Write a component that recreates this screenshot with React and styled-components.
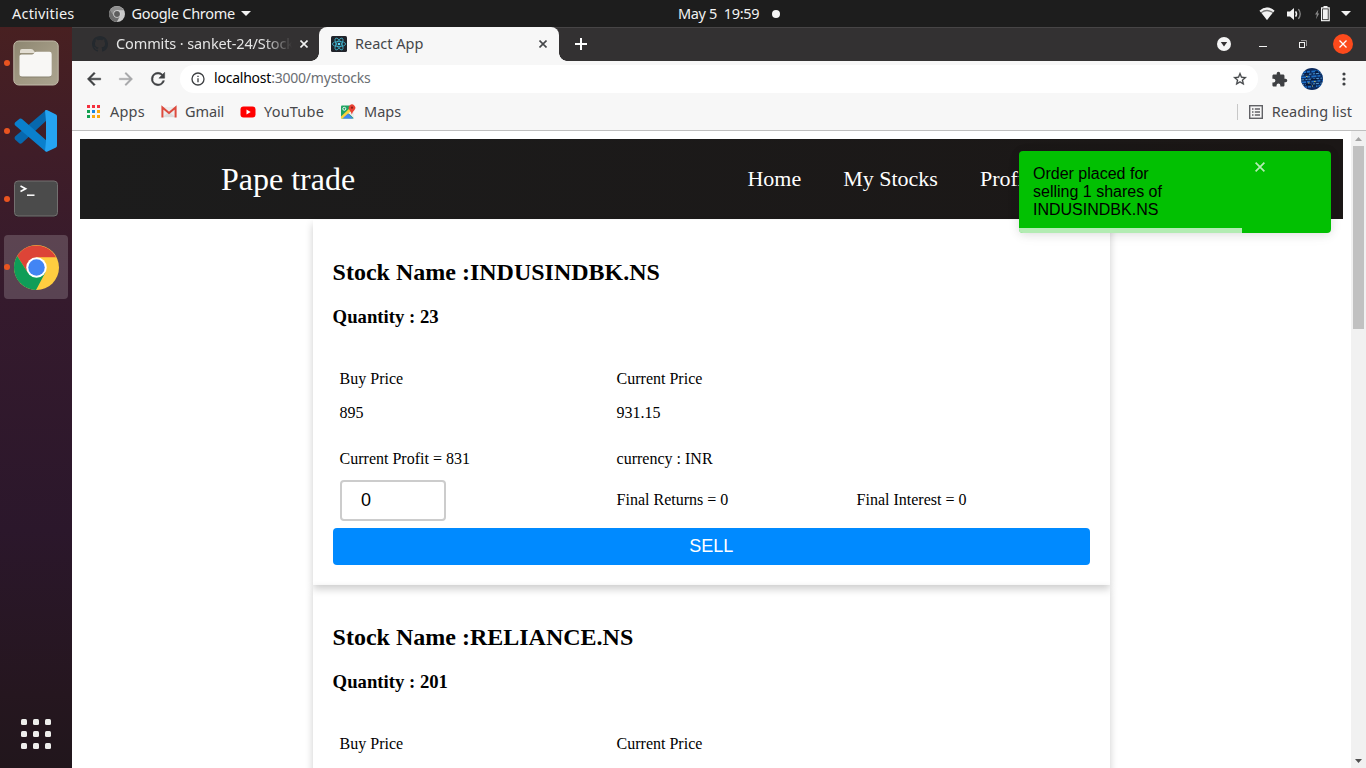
import React from "react";
import styled, { createGlobalStyle, css } from "styled-components";

const uiFont = `"Noto Sans", "Open Sans", sans-serif`;

const GlobalStyle = createGlobalStyle`
  * { box-sizing: border-box; }
  html, body { margin: 0; padding: 0; }
  body { width: 1366px; height: 768px; overflow: hidden; background: #fff; }
  svg { display: block; flex: none; }
`;

const Desktop = styled.div`
  display: grid;
  grid-template: 27px 741px / 72px 1294px;
  width: 1366px;
  height: 768px;
  overflow: hidden;
`;

const UiText = styled.span`
  font-family: ${uiFont};
  font-size: ${(p) => p.$size || 14.5}px;
  letter-spacing: ${(p) => p.$track || 0}px;
  color: ${(p) => p.$color || "inherit"};
  line-height: 20px;
  padding-bottom: 2px;
  white-space: pre;
`;

/* ---------- system bar ---------- */
const TopBar = styled.header`
  grid-column: 1 / 3;
  display: grid;
  grid-template-columns: 1fr auto 1fr;
  align-items: center;
  background: #1d1d1d;
  color: #f2f2f2;
`;
const BarSide = styled.div`
  display: flex;
  align-items: center;
  padding: 0 14px 0 12px;
  ${(p) => p.$end && css`justify-content: flex-end; padding-right: 15px;`}
`;
const AppMenu = styled.div`
  display: flex;
  align-items: center;
  gap: 6px;
  margin-left: 35px;
`;
const Clock = styled.div`
  display: flex;
  align-items: center;
  gap: 13px;
  padding-left: 95px;
  width: 200px;
`;
const Dot = styled.i`
  flex: none;
  width: 8px;
  height: 8px;
  border-radius: 50%;
  background: #f5f5f5;
`;
const Tray = styled.div`
  display: flex;
  align-items: center;
`;
const TrayItem = styled.div`
  margin-left: ${(p) => p.$gap}px;
`;

/* ---------- dock ---------- */
const Dock = styled.aside`
  display: flex;
  flex-direction: column;
  align-items: center;
  gap: 4px;
  padding-top: 4px;
  background: linear-gradient(#482021 0%, #3f1d28 17%, #351a2d 36%, #2b172b 68%, #25161f 90%, #21161c 100%);
`;
const DockItem = styled.div`
  position: relative;
  display: flex;
  align-items: center;
  justify-content: center;
  width: 64px;
  height: 64px;
  border-radius: 4px;
  background: ${(p) => (p.$active ? "rgba(255,255,255,.18)" : "transparent")};
  &::before {
    content: "";
    position: absolute;
    left: 0;
    top: 29px;
    width: 6px;
    height: 6px;
    border-radius: 50%;
    background: #e95420;
  }
`;
const AppGrid = styled.div`
  display: grid;
  grid-template-columns: repeat(3, 6px);
  grid-auto-rows: 6px;
  gap: 6px;
  margin: auto 0 19px;
`;
const GridDot = styled.i`
  background: #eeeeec;
  border-radius: 1.5px;
`;

/* ---------- browser ---------- */
const Browser = styled.main`
  display: flex;
  flex-direction: column;
  min-width: 0;
  background: #f7f7f7;
`;
const TabStrip = styled.div`
  display: flex;
  height: 34px;
  background: #333132;
  box-shadow: inset 0 1px #474546;
`;
const Tab = styled.div`
  position: relative;
  display: flex;
  align-items: center;
  width: ${(p) => p.$width}px;
  padding: 0 ${(p) => p.$end}px 0 ${(p) => p.$start}px;
  gap: 8px;
  color: ${(p) => (p.$active ? "#45474a" : "#e4e4e4")};
  ${(p) =>
    p.$active &&
    css`
      background: #f7f7f7;
      border-radius: 8px 8px 0 0;
      &::before,
      &::after {
        content: "";
        position: absolute;
        bottom: 0;
        width: 8px;
        height: 8px;
      }
      &::before {
        left: -8px;
        background: radial-gradient(circle at 0 0, transparent 7.5px, #f7f7f7 8px);
      }
      &::after {
        right: -8px;
        background: radial-gradient(circle at 100% 0, transparent 7.5px, #f7f7f7 8px);
      }
    `}
`;
const TabTitle = styled.div`
  flex: 1;
  min-width: 0;
  overflow: hidden;
  display: flex;
  ${(p) => p.$fade && css`mask-image: linear-gradient(90deg, #000 84%, transparent 100%);`}
`;
const NewTab = styled.div`
  display: flex;
  align-items: center;
  padding-left: 16px;
`;
const WindowControls = styled.div`
  display: flex;
  align-items: center;
  margin-left: auto;
  padding-right: 13px;
`;
const CloseWindow = styled.div`
  display: grid;
  place-items: center;
  width: 20px;
  height: 20px;
  margin-left: 26px;
  border-radius: 50%;
  background: #fc4a1c;
`;

const Toolbar = styled.div`
  display: flex;
  align-items: center;
  height: 36px;
  padding: 0 15px 0 12px;
`;
const NavIcons = styled.div`
  display: flex;
  gap: 12px;
  width: 96px;
`;
const AddressBar = styled.div`
  display: flex;
  align-items: center;
  width: 1078px;
  height: 28px;
  padding: 0 10px;
  gap: 8px;
  border-radius: 14px;
  background: #fff;
`;
const Url = styled.div`
  flex: 1;
  display: flex;
`;
const ToolbarEnd = styled.div`
  display: flex;
  align-items: center;
  margin-left: 13px;
`;

const BookmarkBar = styled.div`
  display: flex;
  align-items: center;
  height: 34px;
  padding: 0 14px 4px;
  border-bottom: 1px solid #bfbfbf;
  color: #47484b;
`;
const Bookmark = styled.div`
  display: flex;
  align-items: center;
  gap: 8px;
  width: ${(p) => p.$width}px;
`;
const ReadingList = styled.div`
  display: flex;
  align-items: center;
  gap: 8px;
  height: 16px;
  margin-left: auto;
  padding-left: 10px;
  border-left: 1px solid #c8c8c8;
`;

/* ---------- page ---------- */
const Viewport = styled.div`
  position: relative;
  display: flex;
  height: 637px;
  overflow: hidden;
  background: #fff;
`;
const Page = styled.div`
  width: 1279px;
  padding: 8px;
  font-family: "Liberation Serif", "Times New Roman", serif;
  font-size: 16px;
  color: #000;
`;
const NavBar = styled.nav`
  display: flex;
  align-items: center;
  height: 80px;
  padding-left: 141px;
  background: linear-gradient(90deg, #1c1c1c 0%, #1b1716 100%);
  color: #fff;
`;
const Brand = styled.div`
  width: 526.4px;
  font-size: 32px;
`;
const NavLinks = styled.div`
  display: flex;
  gap: 42px;
  font-size: 22px;
`;
const Card = styled.section`
  width: 797.4px;
  height: 365px;
  margin: 0 0 0 232.6px;
  padding: 20px;
  box-shadow: 0 4px 8px 0 rgba(0, 0, 0, 0.2);
`;
const CardList = styled.div`
  padding-top: 1px;
`;
const StockName = styled.h2`
  margin: 19px 0 20px;
  font-size: 24px;
  line-height: 27px;
`;
const Quantity = styled.h3`
  margin: 0;
  font-size: 18.72px;
  line-height: 22px;
`;
const Row = styled.div`
  display: grid;
  grid-template-columns: 277px 240px 1fr;
  align-items: center;
  height: ${(p) => p.$height || 34}px;
  margin-top: ${(p) => p.$top || 0}px;
  padding-left: 7px;
`;
const Figure = styled.span`
  padding-bottom: 1px;
`;
const Amount = styled.input`
  width: 106px;
  height: 41px;
  padding: 0 19.5px;
  border: 2px solid #ccc;
  border-radius: 4px;
  outline: none;
  background: #fff;
  font: 18px "Liberation Sans", Arial, sans-serif;
  color: #000;
`;
const SellButton = styled.button`
  display: block;
  width: 100%;
  height: 37px;
  margin-top: 3px;
  padding: 0 0 1px;
  border: 0;
  border-radius: 4px;
  background: #008aff;
  color: #fff;
  font: 18px "Liberation Sans", Arial, sans-serif;
`;

const Toast = styled.div`
  position: absolute;
  top: 20px;
  right: 35px;
  display: flex;
  width: 312px;
  height: 82px;
  padding: 14px;
  overflow: hidden;
  border-radius: 4px;
  background: #02c002;
  color: #000;
  font: 16px/18px "Liberation Sans", Arial, sans-serif;
`;
const ToastShadow = styled.div`
  position: absolute;
  top: 20px;
  right: 35px;
  width: 312px;
  height: 82px;
  border-radius: 4px;
  box-shadow: 0 1px 10px rgba(0, 0, 0, 0.1), 0 2px 15px rgba(0, 0, 0, 0.05);
`;
const ToastText = styled.div`
  width: 222px;
  padding-right: 80px;
`;
const ToastClose = styled.div`
  margin-top: -3px;
`;
const ToastProgress = styled.i`
  position: absolute;
  left: 0;
  bottom: 0;
  width: 223px;
  height: 5px;
  background: rgba(255, 255, 255, 0.7);
`;

const ScrollBar = styled.div`
  display: flex;
  flex-direction: column;
  align-items: center;
  width: 15px;
  background: #f1f1f1;
`;
const ScrollArrow = styled.div`
  display: grid;
  place-items: center;
  height: 15px;
  ${(p) => p.$end && css`margin-top: auto;`}
`;
const ScrollThumb = styled.div`
  width: 11px;
  height: 183px;
  background: #c1c1c1;
`;

/* ---------- icons ---------- */
const ChromeIcon = ({ size, mono }) => {
  const c = mono
    ? { r: "#8f8f8f", g: "#6c6c6c", y: "#c9c9c9", b: "#5d5d5d", w: "#d8d8d8" }
    : { r: "#dd4437", g: "#0f9d58", y: "#ffcd40", b: "#4285f4", w: "#fff" };
  return (
    <svg width={size} height={size} viewBox="0 0 48 48">
      <circle cx="24" cy="24" r="24" fill={c.y} />
      <path d="M24 13.2H44.9A24 24 0 0 0 3.4 11.7L14.6 29.4 24 24Z" fill={c.r} />
      <path d="M3.4 11.7A24 24 0 0 0 23.5 48L33.4 29.4 24 24 14.6 29.4Z" fill={c.g} />
      <path d="M24 13.2H44.9L33.4 29.4 24 24Z" fill={c.y} />
      <circle cx="24" cy="24" r="10.9" fill={c.w} />
      <circle cx="24" cy="24" r="8.8" fill={c.b} />
    </svg>
  );
};

const Caret = ({ width = 10, height = 5, color = "#f2f2f2" }) => (
  <svg width={width} height={height} viewBox="0 0 10 5">
    <path d="M0 0H10L5 5Z" fill={color} />
  </svg>
);

const WifiIcon = () => (
  <svg width="16" height="14" viewBox="0 0 16 14">
    <path d="M.5 3.8Q8-2.6 15.5 3.8L8 13Z" fill="#777" />
    <path d="M.5 3.8Q8-2.6 15.5 3.8L14.2 5.2Q8 .4 1.8 5.2Z" fill="#f2f2f2" />
    <path d="M2.6 6.1Q8 2.3 13.4 6.1L8 13Z" fill="#f2f2f2" />
  </svg>
);
const VolumeIcon = () => (
  <svg width="15" height="14" viewBox="0 0 15 14" fill="none">
    <path d="M0 4.5H3L7 1V13L3 9.5H0Z" fill="#f2f2f2" />
    <path d="M8.6 4.4Q10.4 7 8.6 9.6" stroke="#f2f2f2" strokeWidth="1.5" />
    <path d="M11.4 2.2Q15 7 11.4 11.8" stroke="#8a8a8a" strokeWidth="1.3" />
  </svg>
);
const BatteryIcon = () => (
  <svg width="15" height="16" viewBox="0 0 15 16">
    <path d="M3.4 3.5 0 8.6H1.9L.9 13.200 4.200 7.600H2.600Z" fill="#8a8a8a" />
    <path d="M8.500 0H12.500V1.300H14.800V15.300H6V1.300H8.500Z" fill="#f2f2f2" />
    <path d="M7.200 2.500H13.600V14.100H7.200Z" fill="#1d1d1d" />
    <path d="M8 3.300H12.800V13.300H8Z" fill="#f2f2f2" />
  </svg>
);

const FilesIcon = () => (
  <svg width="46" height="46" viewBox="0 0 46 46">
    <defs>
      <linearGradient id="files" x1="0" y1="0" x2="1" y2="1">
        <stop offset="0" stopColor="#8d8671" />
        <stop offset=".5" stopColor="#a09882" />
        <stop offset="1" stopColor="#aaa38f" />
      </linearGradient>
    </defs>
    <rect x=".8" y="1" width="44.4" height="44" rx="5" fill="url(#files)" stroke="#c1baa8" strokeWidth="1" />
    <path d="M7 13V11Q7 9 9 9H18Q20 9 21 11L22.5 13Z" fill="#e3ded3" />
    <path d="M7 37V16Q7 14.500 8.500 14.500H19L22.500 12H36.500Q38.500 12 38.500 14V35Q38.500 37.500 36 37.500H9.500Q7 37.500 7 35Z" fill="#6e6857" opacity=".5" />
    <path d="M6.500 35V16Q6.500 14.500 8.500 14.500H19Q20.500 14.500 21.500 12.500 22 11.800 23.500 11.800H36.500Q38.700 11.800 38.700 14V34Q38.700 36.500 36 36.500H9Q6.500 36.500 6.500 34Z" fill="#f8f7f5" />
  </svg>
);
const CodeIcon = () => (
  <svg width="44" height="44" viewBox="0 0 44 44">
    <path d="M1 30.500 5.500 34.500Q7 35 8 34L33 11V1.500L31.500 1.600 1 27.500Q0 29 1 30.500Z" fill="#0768ae" />
    <path d="M1 13.500 5.500 9.800Q7 9 8 10L33 32V42.500L31 42 1 16.200Q0 15 1 13.500Z" fill="#0a80cd" />
    <path d="M31 1.500Q32 .6 33.500 1.300L42 5.500Q43 6 43 7.500V36.500Q43 38 42 38.500L33.500 42.600Q32 43.200 31 42L32 32V12Z" fill="#25a4f2" />
  </svg>
);
const TerminalIcon = () => (
  <svg width="46" height="38" viewBox="0 0 46 38" fill="none">
    <rect x="1" y="1.500" width="44" height="35.500" rx="4" fill="#2b2027" />
    <rect x="1.500" y="1" width="43" height="35" rx="3.500" fill="#4b4b4b" stroke="#747070" />
    <path d="M7.500 6 12.700 8.700 7.500 11.500" stroke="#fff" strokeWidth="1.600" />
    <path d="M14 15.200H21.500" stroke="#fff" strokeWidth="1.500" />
  </svg>
);

const GithubIcon = () => (
  <svg width="16" height="16" viewBox="0 0 16 16">
    <path
      fill="#24292e"
      d="M8 0C3.58 0 0 3.58 0 8c0 3.54 2.29 6.53 5.47 7.59.4.07.55-.17.55-.38 0-.19-.01-.82-.01-1.49-2.01.37-2.53-.49-2.69-.94-.09-.23-.48-.94-.82-1.13-.28-.15-.68-.52-.01-.53.63-.01 1.08.58 1.23.82.72 1.21 1.87.87 2.33.66.07-.52.28-.87.51-1.07-1.78-.2-3.64-.89-3.64-3.95 0-.87.31-1.59.82-2.15-.08-.2-.36-1.02.08-2.12 0 0 .67-.21 2.2.82a7.6 7.6 0 0 1 4 0c1.53-1.04 2.2-.82 2.2-.82.44 1.1.16 1.92.08 2.12.51.56.82 1.27.82 2.15 0 3.07-1.87 3.75-3.65 3.95.29.25.54.73.54 1.48 0 1.07-.01 1.93-.01 2.2 0 .21.15.46.55.38A8 8 0 0 0 16 8c0-4.42-3.58-8-8-8Z"
    />
  </svg>
);
const ReactIcon = () => (
  <svg width="16" height="16" viewBox="0 0 16 16" fill="none" stroke="#3fb5d0" strokeWidth=".8">
    <rect width="16" height="16" rx="1.500" fill="#20232a" stroke="none" />
    <ellipse cx="8" cy="8" rx="6.600" ry="2.600" />
    <ellipse cx="8" cy="8" rx="6.600" ry="2.600" transform="rotate(60 8 8)" />
    <ellipse cx="8" cy="8" rx="6.600" ry="2.600" transform="rotate(120 8 8)" />
    <circle cx="8" cy="8" r="1.300" fill="#61dafb" stroke="none" />
  </svg>
);
const CrossIcon = ({ size = 8, color, width = 1.6 }) => (
  <svg width={size} height={size} viewBox="0 0 8 8" stroke={color} strokeWidth={width}>
    <path d="M.5.5 7.500 7.500M7.500.5.5 7.500" />
  </svg>
);
const PlusIcon = () => (
  <svg width="12" height="12" viewBox="0 0 12 12" stroke="#fff" strokeWidth="2">
    <path d="M6 0V12M0 6H12" />
  </svg>
);

const material = {
  back: "M20 11H7.830l5.590-5.590L12 4l-8 8 8 8 1.410-1.410L7.830 13H20v-2z",
  forward: "M12 4l-1.410 1.410L16.170 11H4v2h12.170l-5.580 5.590L12 20l8-8z",
  reload:
    "M17.650 6.350A7.958 7.958 0 0 0 12 4a8 8 0 1 0 7.730 10h-2.080A6 6 0 1 1 12 6c1.660 0 3.140.69 4.220 1.780L13 11h7V4l-2.350 2.350z",
  info: "M11 7h2v2h-2zm0 4h2v6h-2zm1-9a10 10 0 1 0 0 20 10 10 0 0 0 0-20zm0 18a8 8 0 1 1 0-16 8 8 0 0 1 0 16z",
  star: "M22 9.240l-7.190-.62L12 2 9.190 8.630 2 9.240l5.460 4.730L5.820 21 12 17.270 18.180 21l-1.630-7.030L22 9.240zM12 15.400l-3.760 2.270 1-4.280-3.320-2.880 4.380-.38L12 6.100l1.710 4.040 4.380.38-3.320 2.880 1 4.280L12 15.400z",
  puzzle:
    "M20.500 11H19V7c0-1.100-.9-2-2-2h-4V3.500a2.500 2.500 0 0 0-5 0V5H4c-1.100 0-2 .9-2 2v3.800h1.500a2.700 2.700 0 0 1 0 5.400H2V20c0 1.100.9 2 2 2h3.800v-1.500a2.700 2.700 0 0 1 5.400 0V22H17c1.100 0 2-.9 2-2v-4h1.500a2.500 2.500 0 0 0 0-5z",
};
const Glyph = ({ name, size = 20, color = "#3e4043", weight = 0 }) => (
  <svg width={size} height={size} viewBox="0 0 24 24">
    <path d={material[name]} fill={color} stroke={color} strokeWidth={weight} />
  </svg>
);

const Avatar = () => (
  <svg width="22" height="22" viewBox="0 0 22 22" fill="none">
    <clipPath id="avatar"><circle cx="11" cy="11" r="11" /></clipPath>
    <g clipPath="url(#avatar)">
      <rect width="22" height="22" fill="#0b2a5e" />
      <path d="M0 4.500 22 2.500M0 9.500 22 7.500M0 14.500 22 12.500M1 19.500 22 17.500" stroke="#1f6fc4" strokeWidth="1.700" strokeDasharray="5 1 3 1.500" />
      <path d="M0 7 22 5M0 12 22 10M0 17 22 15" stroke="#5aa3d6" strokeWidth=".9" strokeDasharray="3 1.500 2 1" />
      <path d="M4 6H8M10 11.500H16M5 16.500H10M14 4H17M12 18H15" stroke="#061534" strokeWidth="1.300" />
      <path d="M5 8.500H6.500M13 13.500H14.500M7 15H8.500M11 18H12" stroke="#b3b05e" strokeWidth="1" />
    </g>
  </svg>
);
const DotsIcon = () => (
  <svg width="4" height="14" viewBox="0 0 4 14" fill="#3e4043">
    <circle cx="2" cy="2" r="1.600" /><circle cx="2" cy="7" r="1.600" /><circle cx="2" cy="12" r="1.600" />
  </svg>
);
const AppsIcon = () => (
  <svg width="16" height="16" viewBox="0 0 16 16" shapeRendering="crispEdges">
    <path d="M1 1H4V4H1ZM6 1H9V4H6ZM11 1H14V4H11Z" fill="#f5303e" />
    <path d="M1 6H4V9H1ZM1 11H4V14H1Z" fill="#12a150" />
    <path d="M6 6H9V9H6Z" fill="#1a86e0" />
    <path d="M6 11H9V14H6ZM11 6H14V9H11ZM11 11H14V14H11Z" fill="#fba80f" />
  </svg>
);
const GmailIcon = () => (
  <svg width="16" height="16" viewBox="0 0 16 16">
    <path d="M1 3H15V13.500H1Z" fill="#ececec" />
    <path d="M1.500 13 8 8 14.500 13Z" fill="#dcdcdc" />
    <path d="M1.400 13.500V3.500L8 9 14.600 3.500V13.500" fill="none" stroke="#dd4b3e" strokeWidth="2" />
  </svg>
);
const YoutubeIcon = () => (
  <svg width="16" height="16" viewBox="0 0 16 16">
    <rect x=".5" y="2.500" width="15" height="11" rx="3" fill="#f00" />
    <path d="M6.500 5.600 10.700 8 6.500 10.400Z" fill="#fff" />
  </svg>
);
const MapsIcon = () => (
  <svg width="16" height="16" viewBox="0 0 16 16">
    <rect x="1" y="1.500" width="13" height="13" rx="1" fill="#1fa463" />
    <path d="M1 12.500 11 3 14 5 3 14.500H1Z" fill="#fbd23c" />
    <path d="M8.300 9 14 14.500V6Z" fill="#eee" />
    <path d="M2.500 14.500 8 9.500 13 14.500Z" fill="#4285f4" />
    <circle cx="4.300" cy="4.800" r="1.500" fill="none" stroke="#fff" strokeWidth=".9" />
    <path d="M11.800 10.500Q11.300 8 9.500 6A3.300 3.300 0 1 1 14.500 6Q12.400 8 11.800 10.500Z" fill="#ea4335" />
    <circle cx="12" cy="3.700" r="1.100" fill="#8c1d15" />
  </svg>
);
const ListIcon = () => (
  <svg width="16" height="16" viewBox="0 0 16 16" fill="none" stroke="#616266">
    <rect x="1.700" y="1.700" width="12.600" height="12.600" strokeWidth="1.400" />
    <path d="M4 5H5.500M4 8H5.500M4 11H5.500M6.800 5H12M6.800 8H12M6.800 11H12" strokeWidth="1.400" />
  </svg>
);
const TabSearchIcon = () => (
  <svg width="14" height="14" viewBox="0 0 14 14">
    <circle cx="7" cy="7" r="7" fill="#f5f5f5" />
    <path d="M3.800 5H10.200L7 9.500Z" fill="#333132" />
  </svg>
);
const MinimizeIcon = () => (
  <svg width="8" height="8" viewBox="0 0 8 8"><path d="M0 6H8V7H0Z" fill="#f2f2f2" /></svg>
);
const RestoreIcon = () => (
  <svg width="8" height="8" viewBox="0 0 8 8" fill="none">
    <path d="M2 .5H7.500V6" stroke="#989697" />
    <rect x=".5" y="2.500" width="5" height="5" stroke="#f2f2f2" />
  </svg>
);

/* ---------- data ---------- */
const stocks = [
  { name: "INDUSINDBK.NS", quantity: 23, buy: "895", current: "931.15", profit: "831" },
  { name: "RELIANCE.NS", quantity: 201 },
];

const StockCard = ({ stock }) => (
  <Card>
    <StockName>Stock Name :{stock.name}</StockName>
    <Quantity>Quantity : {stock.quantity}</Quantity>
    <Row $top={34}>
      <span>Buy Price</span>
      <span>Current Price</span>
    </Row>
    {stock.buy && (
      <>
        <Row>
          <span>{stock.buy}</span>
          <span>{stock.current}</span>
        </Row>
        <Row $top={12}>
          <span>Current Profit = {stock.profit}</span>
          <span>currency : INR</span>
        </Row>
        <Row $height={49}>
          <Amount defaultValue="0" />
          <Figure>Final Returns = 0</Figure>
          <Figure>Final Interest = 0</Figure>
        </Row>
        <SellButton>SELL</SellButton>
      </>
    )}
  </Card>
);

export default function App() {
  return (
    <>
      <GlobalStyle />
      <Desktop>
        <TopBar>
          <BarSide>
            <UiText $track={0.2}>Activities</UiText>
            <AppMenu>
              <ChromeIcon size={16} mono />
              <UiText $track={-0.27}>Google Chrome</UiText>
              <Caret />
            </AppMenu>
          </BarSide>
          <Clock>
            <UiText $track={-0.35}>May 5  19:59</UiText>
            <Dot />
          </Clock>
          <BarSide $end>
            <Tray>
              <WifiIcon />
              <TrayItem $gap={12}><VolumeIcon /></TrayItem>
              <TrayItem $gap={13}><BatteryIcon /></TrayItem>
              <TrayItem $gap={11}><Caret /></TrayItem>
            </Tray>
          </BarSide>
        </TopBar>

        <Dock>
          <DockItem><FilesIcon /></DockItem>
          <DockItem><CodeIcon /></DockItem>
          <DockItem><TerminalIcon /></DockItem>
          <DockItem $active><ChromeIcon size={45} /></DockItem>
          <AppGrid>
            {Array.from({ length: 9 }, (_, i) => <GridDot key={i} />)}
          </AppGrid>
        </Dock>

        <Browser>
          <TabStrip>
            <Tab $width={247} $start={20} $end={11}>
              <GithubIcon />
              <TabTitle $fade><UiText $track={-0.12}>Commits · sanket-24/Stock</UiText></TabTitle>
              <CrossIcon color="#f2f2f2" />
            </Tab>
            <Tab $active $width={240} $start={12} $end={12}>
              <ReactIcon />
              <TabTitle><UiText>React App</UiText></TabTitle>
              <CrossIcon color="#45474a" />
            </Tab>
            <NewTab><PlusIcon /></NewTab>
            <WindowControls>
              <TabSearchIcon />
              <TrayItem $gap={28}><MinimizeIcon /></TrayItem>
              <TrayItem $gap={32}><RestoreIcon /></TrayItem>
              <CloseWindow><CrossIcon color="#fff" width={1.3} /></CloseWindow>
            </WindowControls>
          </TabStrip>

          <Toolbar>
            <NavIcons>
              <Glyph name="back" weight={0.6} />
              <Glyph name="forward" color="#a6a7a9" weight={0.4} />
              <Glyph name="reload" weight={0.6} />
            </NavIcons>
            <AddressBar>
              <Glyph name="info" size={16} />
              <Url>
                <UiText $size={14} $track={-0.22} $color="#000">localhost</UiText>
                <UiText $size={14} $track={-0.22} $color="#6b6e73">:3000/mystocks</UiText>
              </Url>
              <Glyph name="star" size={16} weight={0.4} />
            </AddressBar>
            <ToolbarEnd>
              <Glyph name="puzzle" size={17} />
              <TrayItem $gap={13}><Avatar /></TrayItem>
              <TrayItem $gap={19}><DotsIcon /></TrayItem>
            </ToolbarEnd>
          </Toolbar>

          <BookmarkBar>
            <Bookmark $width={75}><AppsIcon /><UiText $track={0.2}>Apps</UiText></Bookmark>
            <Bookmark $width={79}><GmailIcon /><UiText $track={-0.1}>Gmail</UiText></Bookmark>
            <Bookmark $width={100}><YoutubeIcon /><UiText $track={0.2}>YouTube</UiText></Bookmark>
            <Bookmark $width={80}><MapsIcon /><UiText>Maps</UiText></Bookmark>
            <ReadingList><ListIcon /><UiText $track={0.08}>Reading list</UiText></ReadingList>
          </BookmarkBar>

          <Viewport>
            <Page>
              <NavBar>
                <Brand>Pape trade</Brand>
                <NavLinks>
                  <span>Home</span>
                  <span>My Stocks</span>
                  <span>Profile</span>
                </NavLinks>
              </NavBar>
              <CardList>
                {stocks.map((s) => <StockCard key={s.name} stock={s} />)}
              </CardList>
            </Page>
            <ScrollBar>
              <ScrollArrow>
                <svg width="7" height="4" viewBox="0 0 7 4"><path d="M0 4 3.500 0 7 4Z" fill="#a3a3a3" /></svg>
              </ScrollArrow>
              <ScrollThumb />
              <ScrollArrow $end>
                <svg width="7" height="4" viewBox="0 0 7 4"><path d="M0 0 3.500 4 7 0Z" fill="#505050" /></svg>
              </ScrollArrow>
            </ScrollBar>
            <ToastShadow />
            <Toast>
              <ToastText>Order placed for selling 1 shares of INDUSINDBK.NS</ToastText>
              <ToastClose><CrossIcon size={10} color="#b3ecb3" width={1.4} /></ToastClose>
              <ToastProgress />
            </Toast>
          </Viewport>
        </Browser>
      </Desktop>
    </>
  );
}
